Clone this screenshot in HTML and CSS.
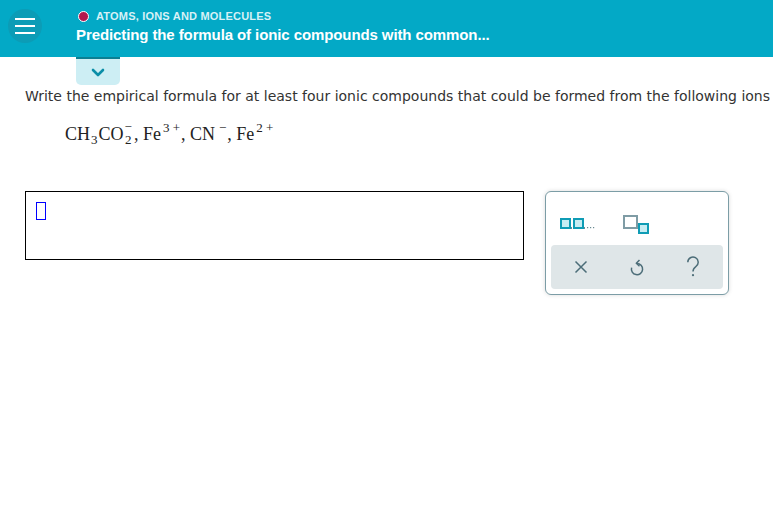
FILE: index.html
```html
<!DOCTYPE html>
<html>
<head>
<meta charset="utf-8">
<link rel="stylesheet" href="styles.css">
</head>
<body>
<header class="topbar">
  <div class="menu-btn">
    <span></span><span></span><span></span>
  </div>
  <div class="titles">
    <div class="topic"><span class="dot"></span>ATOMS, IONS AND MOLECULES</div>
    <div class="title">Predicting the formula of ionic compounds with common...</div>
  </div>
</header>
<div class="tab">
  <svg width="14" height="9" viewBox="0 0 14 9"><path d="M2 2 L7 7 L12 2" fill="none" stroke="#0b8ea8" stroke-width="2.6" stroke-linecap="round" stroke-linejoin="round"/></svg>
</div>
<main class="content">
  <p class="prompt">Write the empirical formula for at least four ionic compounds that could be formed from the following ions</p>
  <div class="formula">CH<sub>3</sub>CO<span class="stack"><span class="s-up">&minus;</span><span class="s-dn">2</span></span>, Fe<sup>3 +</sup>, CN<sup class="neg">&minus;</sup>, Fe<sup>2 +</sup></div>
  <div class="answer-row">
    <div class="answer-box"><span class="caret"></span></div>
    <div class="palette">
      <div class="pal-top">
        <div class="pal-icon list">
          <svg width="40" height="12" viewBox="0 0 40 12">
            <rect x="1" y="1" width="9" height="9" fill="#c7edf3" stroke="#0f9cb5" stroke-width="2"/>
            <rect x="11" y="9" width="1" height="2" fill="#6b8a93"/>
            <rect x="14" y="1" width="9" height="9" fill="#c7edf3" stroke="#0f9cb5" stroke-width="2"/>
            <rect x="24" y="9" width="1" height="2" fill="#6b8a93"/>
            <rect x="27" y="9" width="1.2" height="1.2" fill="#6b8a93"/>
            <rect x="30" y="9" width="1.2" height="1.2" fill="#6b8a93"/>
            <rect x="33" y="9" width="1.2" height="1.2" fill="#6b8a93"/>
          </svg>
        </div>
        <div class="pal-icon sub">
          <svg width="28" height="20" viewBox="0 0 28 20">
            <rect x="1" y="1" width="13" height="12" fill="#fff" stroke="#7f9ca5" stroke-width="2"/>
            <rect x="16" y="9" width="9" height="9" fill="#c7edf3" stroke="#0f9cb5" stroke-width="2"/>
          </svg>
        </div>
      </div>
      <div class="pal-bottom">
        <button class="tool">
          <svg width="14" height="14" viewBox="0 0 14 14"><path d="M1.5 1.5 L12.5 12.5 M12.5 1.5 L1.5 12.5" stroke="#4c6d78" stroke-width="1.5" fill="none"/></svg>
        </button>
        <button class="tool">
          <svg width="16" height="20" viewBox="0 0 16 20"><path d="M8 6.5 A5.6 5.6 0 1 1 2.6 10.6" fill="none" stroke="#4c6d78" stroke-width="1.5"/><path d="M10.5 3 L7.3 6.3 L10.5 9.2" fill="none" stroke="#4c6d78" stroke-width="1.5" stroke-linejoin="round"/></svg>
        </button>
        <button class="tool">
          <svg width="14" height="22" viewBox="0 0 14 22"><path d="M1.8 6.2 A5.2 5.2 0 1 1 9.8 10.6 C8 11.8 7 12.8 7 15.6" fill="none" stroke="#4c6d78" stroke-width="1.5"/><circle cx="7" cy="19.2" r="1.1" fill="#4c6d78"/></svg>
        </button>
      </div>
    </div>
  </div>
</main>
</body>
</html>
```
FILE: styles.css
```css
html, body {
  margin: 0;
  padding: 0;
  background: #fff;
}
body {
  width: 773px;
  height: 508px;
  overflow: hidden;
  font-family: "DejaVu Sans", Verdana, sans-serif;
}
.topbar {
  height: 57px;
  background: #03a9c6;
  display: flex;
  align-items: flex-start;
}
.menu-btn {
  width: 34px;
  height: 34px;
  border-radius: 50%;
  background: #0c9cb6;
  margin: 9px 0 0 8px;
  display: flex;
  flex-direction: column;
  justify-content: center;
  align-items: center;
  gap: 5px;
}
.menu-btn span {
  display: block;
  width: 20px;
  height: 2px;
  background: #fff;
}
.titles {
  margin-left: 34px;
  padding-top: 9px;
}
.topic {
  display: flex;
  align-items: center;
  font-family: "Liberation Sans", Arial, sans-serif;
  font-weight: bold;
  font-size: 11px;
  color: #d6f1f6;
  letter-spacing: 0.2px;
  height: 14px;
}
.dot {
  width: 9px;
  height: 9px;
  border-radius: 50%;
  background: #b3174c;
  border: 1px solid #fff;
  margin: 0 7px 0 2px;
}
.title {
  font-family: "Liberation Sans", Arial, sans-serif;
  font-weight: bold;
  font-size: 15px;
  color: #fff;
  margin-top: 3px;
  letter-spacing: -0.1px;
}
.tab {
  margin-left: 76px;
  width: 44px;
  height: 26px;
  background: #cdeef4;
  border-top: 2px solid #0b7f93;
  border-radius: 0 0 5px 5px;
  display: flex;
  justify-content: center;
  align-items: center;
}
.content {
  padding-left: 25px;
}
.prompt {
  margin: 2px 0 0 0;
  font-size: 14px;
  color: #333;
  white-space: nowrap;
  line-height: 18px;
}
.formula {
  margin: 15px 0 0 40px;
  font-family: "Liberation Serif", "Times New Roman", serif;
  font-size: 18px;
  color: #222;
  line-height: 24px;
  height: 26px;
  white-space: nowrap;
}
.formula sub, .formula sup {
  font-size: 13px;
  line-height: 0;
}
.formula sup {
  vertical-align: 8px;
  margin-left: 2px;
  margin-right: 1px;
}
.formula sup.neg {
  margin-left: 4px;
}
.formula sub {
  vertical-align: -4px;
  margin: 0 1px;
}
.stack {
  display: inline-flex;
  flex-direction: column;
  align-items: center;
  vertical-align: 9px;
  font-size: 13px;
  line-height: 13px;
  margin: 0 2px 0 1px;
}
.s-up, .s-dn {
  display: block;
}
.answer-row {
  display: flex;
  align-items: flex-start;
  margin-top: 45px;
}
.answer-box {
  width: 497px;
  height: 67px;
  border: 1px solid #000;
  position: relative;
}
.caret {
  position: absolute;
  left: 10px;
  top: 10px;
  width: 8px;
  height: 16px;
  border: 1px solid #0000ff;
}
.palette {
  margin-left: 21px;
  border: 1px solid #7c9da6;
  border-radius: 6px;
  box-shadow: 0 0 4px rgba(0,0,0,0.15);
  background: #fff;
  display: flex;
  flex-direction: column;
  padding: 5px;
  box-sizing: border-box;
  width: 184px;
  height: 104px;
}
.pal-top {
  flex: 1;
  display: flex;
  align-items: center;
  padding-left: 9px;
  gap: 23px;
}
.pal-icon {
  display: flex;
}
.pal-icon.list {
  margin-top: 6px;
}
.pal-icon.sub {
  margin-top: 8px;
}
.pal-bottom {
  height: 44px;
  background: #dfe6e8;
  border-radius: 4px;
  display: flex;
  justify-content: center;
  gap: 16px;
  align-items: center;
}
.tool {
  border: 0;
  background: transparent;
  width: 40px;
  height: 30px;
  display: flex;
  justify-content: center;
  align-items: center;
  padding: 0;
}
```
